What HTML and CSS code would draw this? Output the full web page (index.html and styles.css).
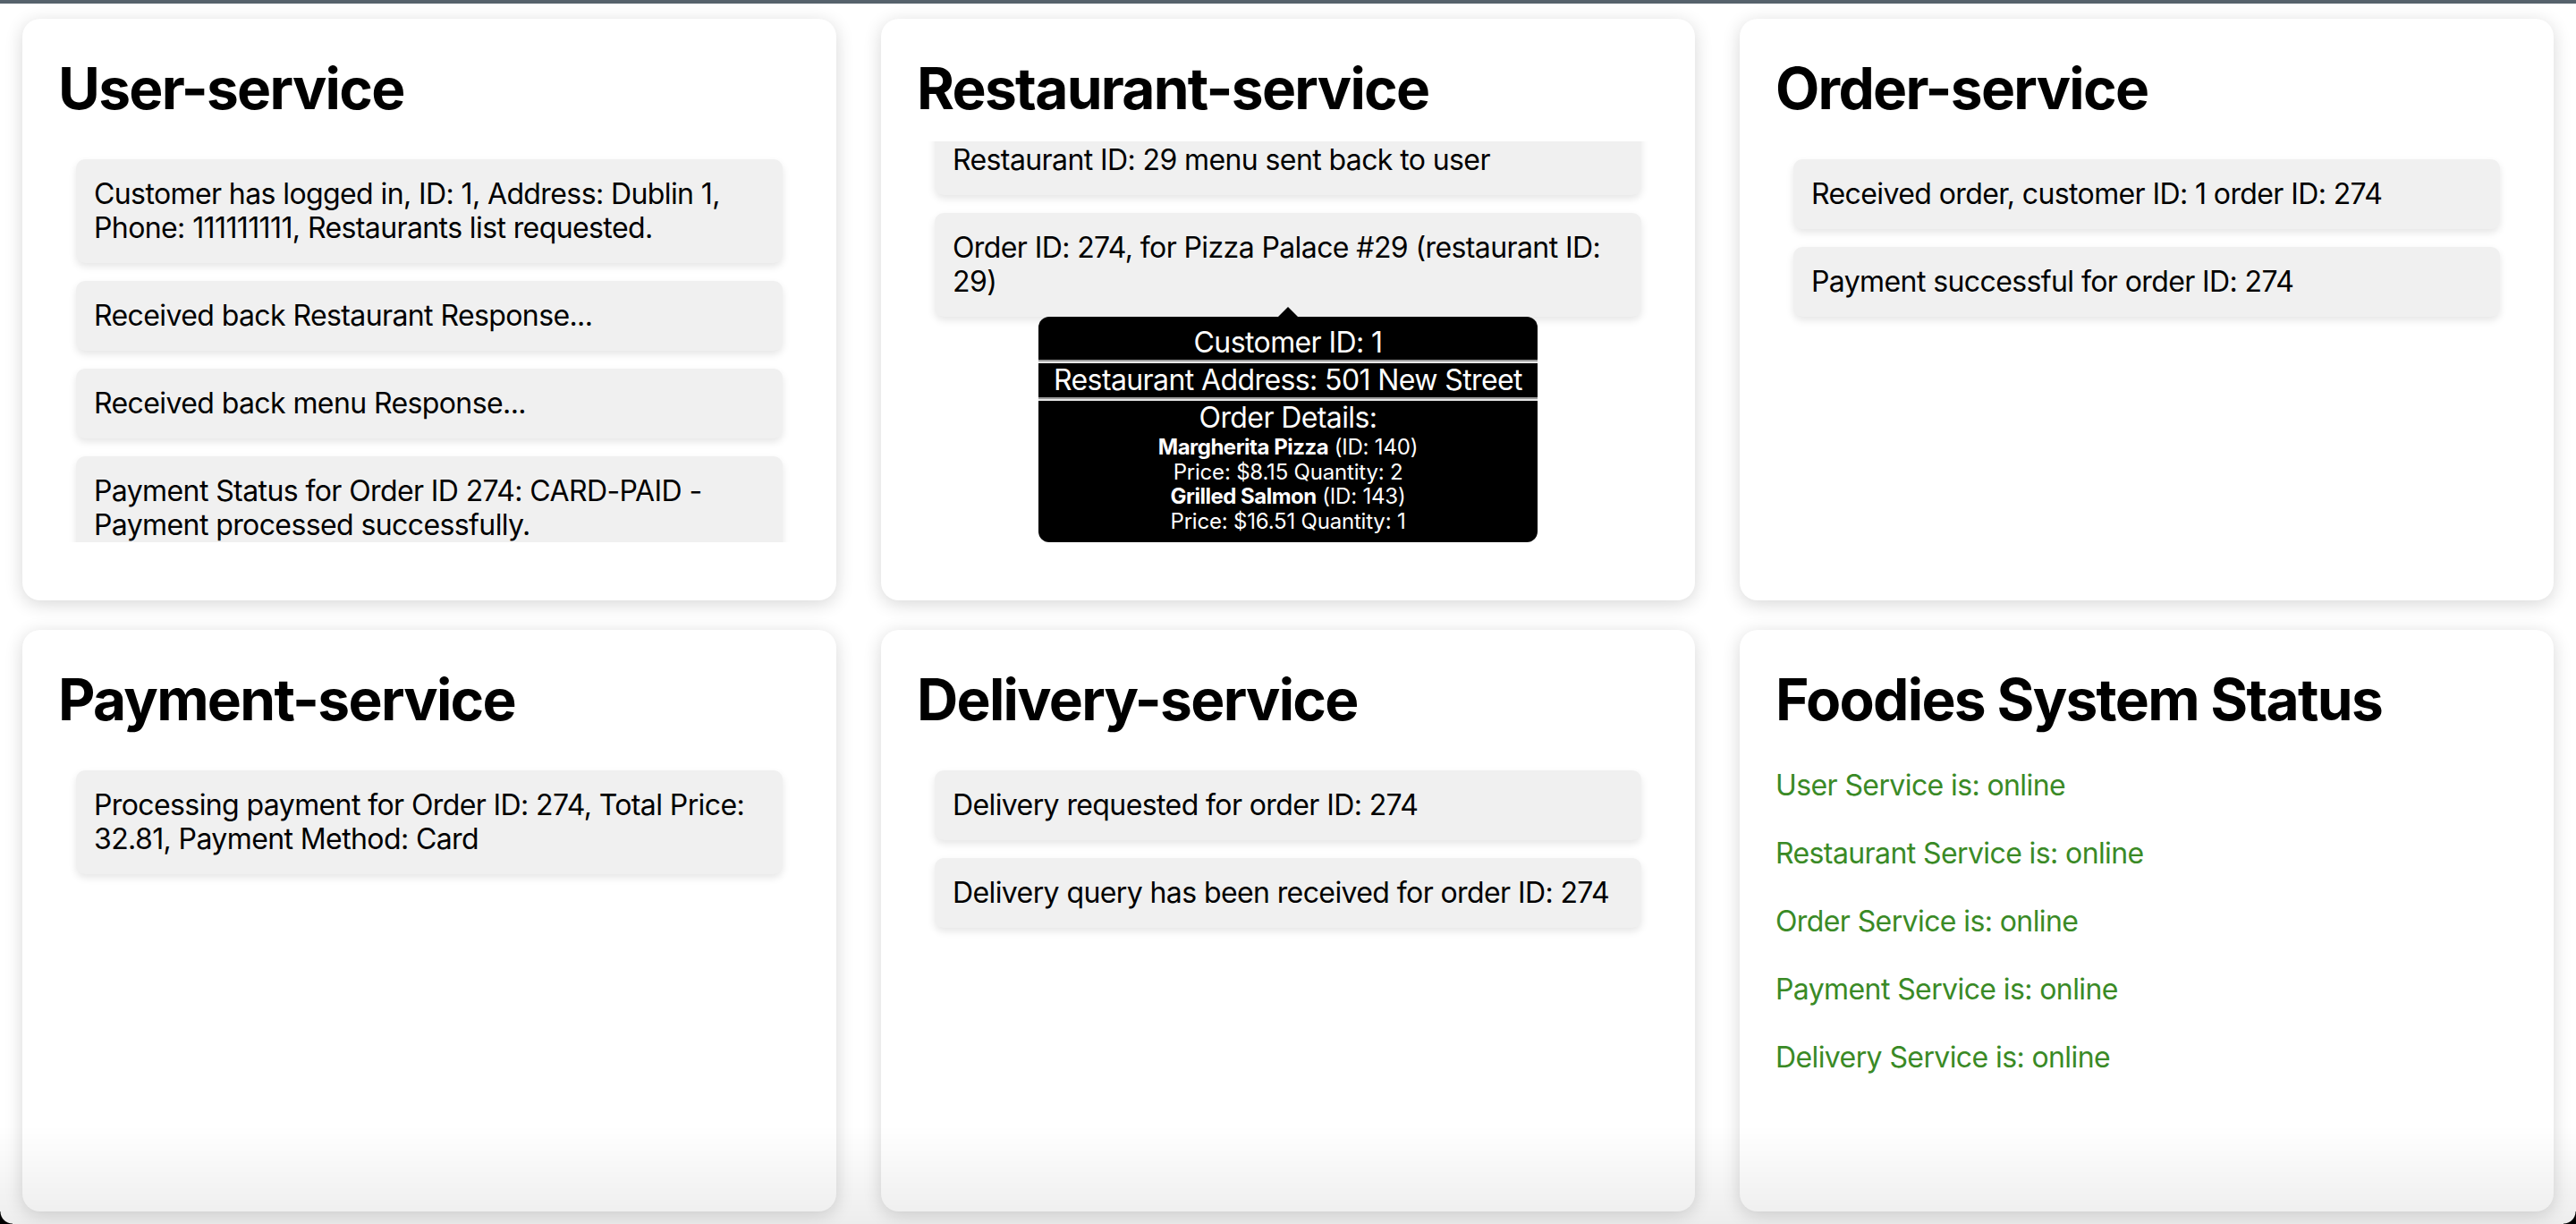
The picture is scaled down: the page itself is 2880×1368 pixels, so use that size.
FILE: index.html
```html
<!DOCTYPE html>
<html lang="en">
<head>
<meta charset="utf-8">
<title>Foodies Dashboard</title>
<link rel="stylesheet" href="styles.css">
</head>
<body>
<div class="topbar"></div>
<main class="grid">
  <section class="card">
    <h1 class="card-title">User-service</h1>
    <div class="log">
      <div class="msg">Customer has logged in, ID: 1, Address: Dublin 1, Phone: 111111111, Restaurants list requested.</div>
      <div class="msg">Received back Restaurant Response...</div>
      <div class="msg">Received back menu Response...</div>
      <div class="msg">Payment Status for Order ID 274: CARD-PAID - Payment processed successfully.</div>
    </div>
  </section>

  <section class="card">
    <h1 class="card-title">Restaurant-service</h1>
    <div class="log log-end">
      <div class="msg">Restaurant ID: 29 menu sent back to user</div>
      <div class="msg">Order ID: 274, for Pizza Palace #29 (restaurant ID: 29)
        <div class="tip">
          <div class="tip-row">Customer ID: 1</div>
          <div class="tip-sep"></div>
          <div class="tip-row">Restaurant Address: 501 New Street</div>
          <div class="tip-sep"></div>
          <div class="tip-row">Order Details:</div>
          <div class="tip-small"><b>Margherita Pizza</b> (ID: 140)</div>
          <div class="tip-small">Price: $8.15 Quantity: 2</div>
          <div class="tip-small"><b>Grilled Salmon</b> (ID: 143)</div>
          <div class="tip-small">Price: $16.51 Quantity: 1</div>
        </div>
      </div>
    </div>
  </section>

  <section class="card">
    <h1 class="card-title">Order-service</h1>
    <div class="log">
      <div class="msg">Received order, customer ID: 1 order ID: 274</div>
      <div class="msg">Payment successful for order ID: 274</div>
    </div>
  </section>

  <section class="card">
    <h1 class="card-title">Payment-service</h1>
    <div class="log">
      <div class="msg">Processing payment for Order ID: 274, Total Price: 32.81, Payment Method: Card</div>
    </div>
  </section>

  <section class="card">
    <h1 class="card-title">Delivery-service</h1>
    <div class="log">
      <div class="msg">Delivery requested for order ID: 274</div>
      <div class="msg">Delivery query has been received for order ID: 274</div>
    </div>
  </section>

  <section class="card">
    <h1 class="card-title">Foodies System Status</h1>
    <div class="status">
      <p class="status-line">User Service is: online</p>
      <p class="status-line">Restaurant Service is: online</p>
      <p class="status-line">Order Service is: online</p>
      <p class="status-line">Payment Service is: online</p>
      <p class="status-line">Delivery Service is: online</p>
    </div>
  </section>
</main>
<div class="shade"></div>
<div class="corner corner-left"></div>
<div class="corner corner-right"></div>
<script src="script.js"></script>
</body>
</html>
```

FILE: styles.css
```css
* {
  box-sizing: border-box;
}

html,
body {
  margin: 0;
  height: 100%;
  background: #ffffff;
}

body {
  font-family: Inter, "Noto Sans", "Liberation Sans", sans-serif;
  font-size: 32px;
  letter-spacing: -0.6px;
  color: #000000;
  overflow: hidden;
}

.topbar {
  height: 4px;
  background: #56626c;
}

.grid {
  display: grid;
  grid-template-columns: repeat(3, 1fr);
  column-gap: 50px;
  row-gap: 33px;
  padding: 17px 25px 0;
}

.card {
  background: #ffffff;
  border-radius: 20px;
  box-shadow: 0 4px 20px rgba(0, 0, 0, 0.16);
  height: 650px;
  padding: 40px 40px 0;
}

.card-title {
  font-size: 64px;
  line-height: 76px;
  font-weight: 700;
  margin: 0 0 21px;
  letter-spacing: -1.7px;
}

.log {
  height: 448px;
  overflow-y: auto;
  scrollbar-width: none;
}

.log::-webkit-scrollbar {
  display: none;
}

.msg {
  position: relative;
  background: #f0f0f0;
  border-radius: 10px;
  box-shadow: 0 4px 8px rgba(0, 0, 0, 0.1);
  margin: 20px;
  padding: 20px;
  line-height: 38px;
}

.tip {
  position: absolute;
  top: 100%;
  left: 50%;
  transform: translateX(-50%);
  width: 558px;
  background: #000000;
  color: #ffffff;
  border-radius: 12px;
  padding: 10px 0;
  text-align: center;
  white-space: nowrap;
  z-index: 2;
}

.tip::before {
  content: "";
  position: absolute;
  bottom: 100%;
  left: 50%;
  margin-left: -11px;
  border-left: 11px solid transparent;
  border-right: 11px solid transparent;
  border-bottom: 11px solid #000000;
}

.tip-row {
  line-height: 38px;
}

.tip-sep {
  height: 4px;
  border-top: 2px solid #9c9c9c;
  border-bottom: 2px solid #e6e6e6;
}

.tip-small {
  font-size: 24px;
  line-height: 27.5px;
  letter-spacing: -0.2px;
}

.tip-small b {
  font-weight: 700;
  letter-spacing: -0.5px;
}

.status {
  padding-top: 18px;
}

.status-line {
  margin: 0 0 38px;
  line-height: 38px;
  color: #3a8a26;
}

.shade {
  position: fixed;
  left: 0;
  right: 0;
  bottom: 0;
  height: 110px;
  pointer-events: none;
  background: linear-gradient(to bottom, rgba(0, 0, 0, 0), rgba(0, 0, 0, 0.07));
}

.corner {
  position: fixed;
  bottom: 0;
  width: 14px;
  height: 14px;
}

.corner-left {
  left: 0;
  background: radial-gradient(circle at 100% 0, transparent 13px, #000000 14px);
}

.corner-right {
  right: 0;
  background: radial-gradient(circle at 0 0, transparent 13px, #000000 14px);
}
```

FILE: script.js
```js
document.querySelectorAll('.log-end').forEach(function (el) {
  el.scrollTop = el.scrollHeight;
});
```
